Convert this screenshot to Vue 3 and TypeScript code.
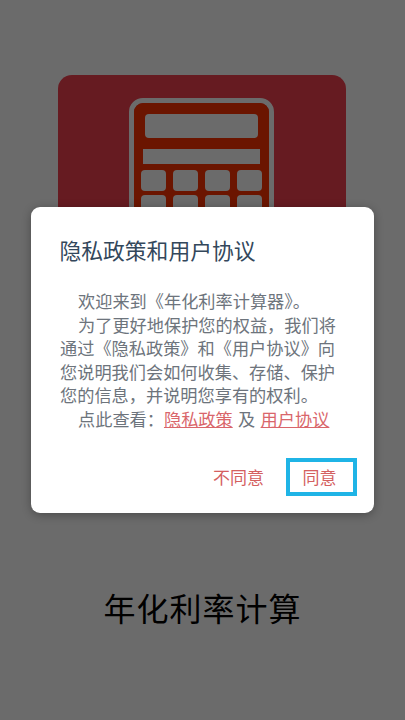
<script setup lang="ts">
const keys: number[] = Array.from({ length: 8 }, (_, i) => i)
</script>

<template>
  <main class="page">
    <div class="logo">
      <div class="calc">
        <div class="calc-body">
          <div class="display"></div>
          <div class="bar"></div>
          <div class="keys">
            <span v-for="k in keys" :key="k" class="key"></span>
          </div>
        </div>
      </div>
    </div>
    <h1 class="app-name">年化利率计算</h1>

    <div class="scrim">
      <section class="dialog">
        <h2 class="dialog-title">隐私政策和用户协议</h2>
        <div class="dialog-body">
          <p class="para">欢迎来到《年化利率计算器》。</p>
          <p class="para">为了更好地保护您的权益&#65292;我们将通过《隐私政策》和《用户协议》向您说明我们会如何收集、存储、保护您的信息&#65292;并说明您享有的权利。</p>
          <p class="para links">点此查看&#65306;<a class="link">隐私政策</a> 及 <a class="link">用户协议</a></p>
        </div>
        <div class="actions">
          <button class="btn">不同意</button>
          <button class="btn focused"><span class="btn-label">同意</span></button>
        </div>
      </section>
    </div>
  </main>
</template>

<style scoped>
.page {
  position: relative;
  width: 405px;
  height: 720px;
  overflow: hidden;
  background: #fff;
  padding-top: 75px;
  box-sizing: border-box;
  display: flex;
  flex-direction: column;
  align-items: center;
  font-family: "Noto Sans CJK SC", "Noto Sans", sans-serif;
}
.logo {
  width: 288px;
  height: 288px;
  border-radius: 14px;
  background: #f2404f;
  padding: 23px 1px 0 0;
  box-sizing: border-box;
  display: flex;
  justify-content: center;
  margin-left: -1px;
}
.calc {
  width: 145px;
  height: 240px;
  box-sizing: border-box;
  border: 5px solid #fff;
  border-radius: 14px;
  overflow: hidden;
}
.calc-body {
  height: 100%;
  background: #ff3300;
  box-sizing: border-box;
  padding: 11px 6px 0;
  display: flex;
  flex-direction: column;
  align-items: center;
}
.display {
  width: 113px;
  height: 24px;
  background: #fff;
  border-radius: 4px;
}
.bar {
  width: 117px;
  height: 15px;
  background: #fff;
  margin-top: 11px;
}
.keys {
  display: grid;
  grid-template-columns: repeat(4, 25px);
  grid-auto-rows: 21px;
  gap: 4px 7px;
  margin-top: 6px;
}
.key {
  background: #fff;
  border-radius: 4px;
}
.app-name {
  margin: 224px 0 0;
  font-size: 32px;
  line-height: 40px;
  font-weight: 400;
  letter-spacing: 1px;
  color: #000;
}
.scrim {
  position: absolute;
  inset: 0;
  background: rgba(0, 0, 0, 0.58);
}
.dialog {
  position: absolute;
  left: 31px;
  top: 207px;
  width: 343px;
  height: 306px;
  box-sizing: border-box;
  background: #fff;
  border-radius: 9px;
  box-shadow: 0 2px 10px rgba(0, 0, 0, 0.3);
  padding: 27px 17px 0 29px;
  display: flex;
  flex-direction: column;
}
.dialog-title {
  margin: 0 0 0 -0.6px;
  font-size: 21.8px;
  line-height: 32px;
  font-weight: 400;
  color: #33475b;
}
.dialog-body {
  margin-top: 23px;
  width: 280px;
  font-size: 17.2px;
  line-height: 23.6px;
  color: #6d747c;
}
.para {
  margin: 0;
  text-indent: 18px;
}
.links {
  word-spacing: 1.5px;
}
.link {
  color: #d9666b;
  text-decoration: underline;
}
.actions {
  margin-top: 27.5px;
  display: flex;
  justify-content: flex-end;
  align-items: center;
  gap: 18px;
}
.btn {
  appearance: none;
  background: none;
  border: 4px solid transparent;
  height: 38px;
  padding: 0;
  font: inherit;
  font-size: 17px;
  line-height: 24px;
  color: #d4605f;
  box-sizing: border-box;
}
.focused {
  width: 71px;
  border-color: #1fb4e6;
}
.btn-label {
  margin-right: 4px;
}
</style>
